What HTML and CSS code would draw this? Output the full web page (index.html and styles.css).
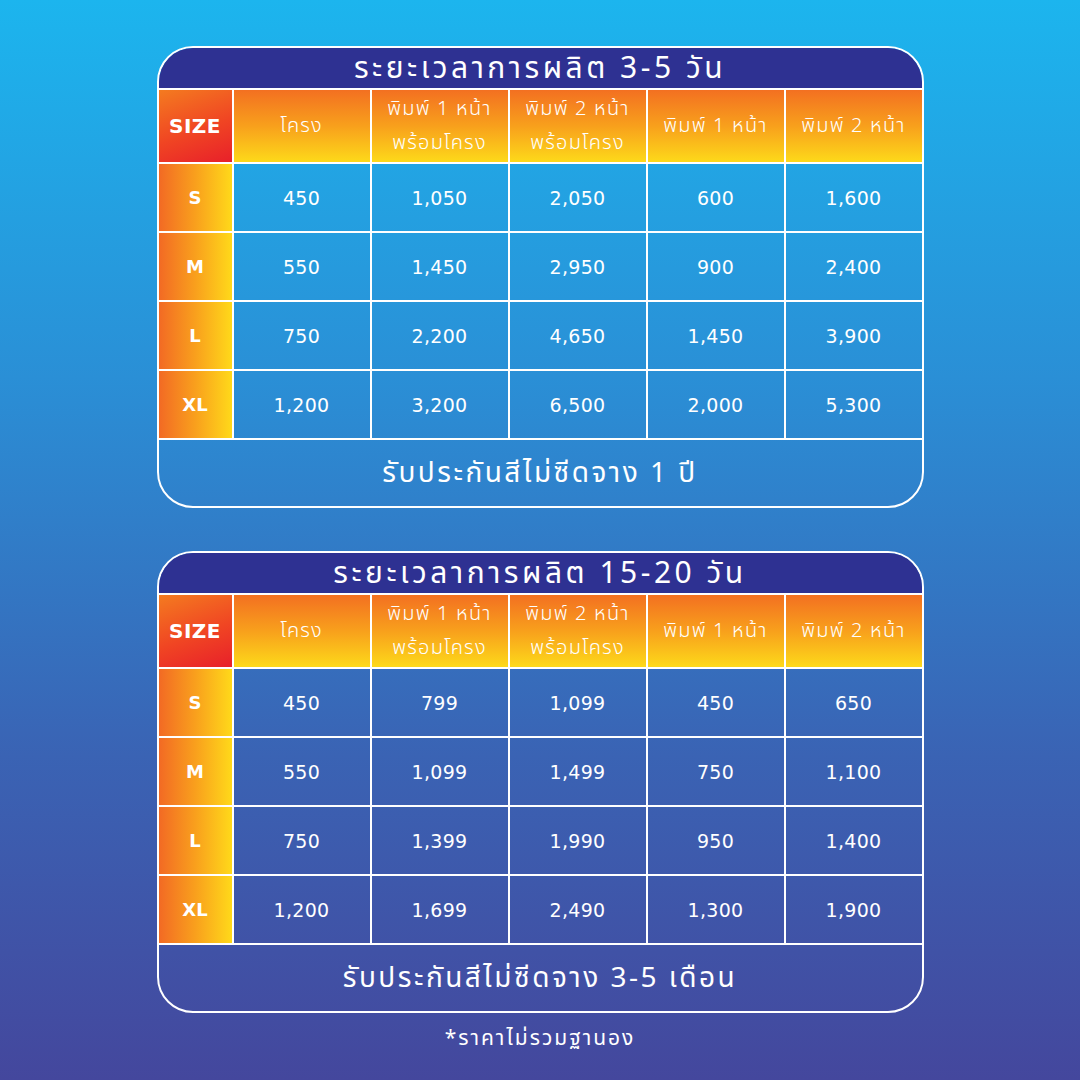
FILE: index.html
```html
<!DOCTYPE html>
<html lang="th">
<head>
<meta charset="utf-8">
<title>ราคา</title>
<link rel="stylesheet" href="styles.css">
</head>
<body>
<main class="page">
  <section class="card">
    <div class="card-title">ระยะเวลาการผลิต 3-5 วัน</div>
    <div class="grid">
      <div class="cell head size-head">SIZE</div>
      <div class="cell head">โครง</div>
      <div class="cell head two">พิมพ์ 1 หน้า<br>พร้อมโครง</div>
      <div class="cell head two">พิมพ์ 2 หน้า<br>พร้อมโครง</div>
      <div class="cell head">พิมพ์ 1 หน้า</div>
      <div class="cell head">พิมพ์ 2 หน้า</div>

      <div class="cell size">S</div>
      <div class="cell num">450</div><div class="cell num">1,050</div><div class="cell num">2,050</div><div class="cell num">600</div><div class="cell num">1,600</div>
      <div class="cell size">M</div>
      <div class="cell num">550</div><div class="cell num">1,450</div><div class="cell num">2,950</div><div class="cell num">900</div><div class="cell num">2,400</div>
      <div class="cell size">L</div>
      <div class="cell num">750</div><div class="cell num">2,200</div><div class="cell num">4,650</div><div class="cell num">1,450</div><div class="cell num">3,900</div>
      <div class="cell size">XL</div>
      <div class="cell num">1,200</div><div class="cell num">3,200</div><div class="cell num">6,500</div><div class="cell num">2,000</div><div class="cell num">5,300</div>
    </div>
    <div class="card-foot">รับประกันสีไม่ซีดจาง 1 ปี</div>
  </section>

  <section class="card">
    <div class="card-title">ระยะเวลาการผลิต 15-20 วัน</div>
    <div class="grid">
      <div class="cell head size-head">SIZE</div>
      <div class="cell head">โครง</div>
      <div class="cell head two">พิมพ์ 1 หน้า<br>พร้อมโครง</div>
      <div class="cell head two">พิมพ์ 2 หน้า<br>พร้อมโครง</div>
      <div class="cell head">พิมพ์ 1 หน้า</div>
      <div class="cell head">พิมพ์ 2 หน้า</div>

      <div class="cell size">S</div>
      <div class="cell num">450</div><div class="cell num">799</div><div class="cell num">1,099</div><div class="cell num">450</div><div class="cell num">650</div>
      <div class="cell size">M</div>
      <div class="cell num">550</div><div class="cell num">1,099</div><div class="cell num">1,499</div><div class="cell num">750</div><div class="cell num">1,100</div>
      <div class="cell size">L</div>
      <div class="cell num">750</div><div class="cell num">1,399</div><div class="cell num">1,990</div><div class="cell num">950</div><div class="cell num">1,400</div>
      <div class="cell size">XL</div>
      <div class="cell num">1,200</div><div class="cell num">1,699</div><div class="cell num">2,490</div><div class="cell num">1,300</div><div class="cell num">1,900</div>
    </div>
    <div class="card-foot">รับประกันสีไม่ซีดจาง 3-5 เดือน</div>
  </section>

  <p class="note">*ราคาไม่รวมฐานอง</p>
</main>
</body>
</html>
```

FILE: styles.css
```css
* { box-sizing: border-box; }

html, body {
  margin: 0;
  padding: 0;
}

body {
  width: 1080px;
  height: 1080px;
  overflow: hidden;
  background: linear-gradient(180deg, #1cb5ee 0%, #2a8fd6 35%, #3a63b4 70%, #44479d 100%);
  font-family: "Noto Sans Thai", "Noto Sans Thai UI", "Noto Sans", "DejaVu Sans", sans-serif;
  color: #fff;
}

.page {
  display: flex;
  flex-direction: column;
  align-items: center;
  padding-top: 46px;
}

.card {
  width: 767px;
  border: 2px solid #fff;
  border-radius: 36px;
  overflow: hidden;
  display: flex;
  flex-direction: column;
}

.card + .card { margin-top: 43px; }

.card-title {
  height: 40px;
  background: #2e3192;
  display: flex;
  align-items: center;
  justify-content: center;
  font-size: 30px;
  font-weight: 400;
  line-height: 1;
  letter-spacing: 3.5px;
  padding-top: 2px;
}

.grid {
  display: grid;
  grid-template-columns: 73px repeat(5, 1fr);
  grid-template-rows: 74px repeat(4, 69px);
}

.cell {
  border-top: 2px solid #fff;
  border-left: 2px solid #fff;
  display: flex;
  align-items: center;
  justify-content: center;
  text-align: center;
}

.cell:nth-child(6n+1) { border-left: none; }

.head {
  background: linear-gradient(180deg, #f37021 0%, #f8a01c 50%, #fdd91a 100%);
  font-size: 20px;
  font-weight: 300;
  line-height: 34px;
  letter-spacing: 1.2px;
  white-space: nowrap;
}

.size-head {
  background: linear-gradient(160deg, #f47b20 0%, #f04523 55%, #e8202a 100%);
  font-family: "DejaVu Sans", sans-serif;
  font-weight: 800;
  font-size: 20px;
  letter-spacing: 0.5px;
}

.size {
  background: linear-gradient(90deg, #f26a24 0%, #f9a01d 50%, #ffd91a 100%);
  font-family: "DejaVu Sans", sans-serif;
  font-weight: 800;
  font-size: 18px;
}

.num {
  font-family: "DejaVu Sans", sans-serif;
  font-size: 19px;
  font-weight: 400;
  letter-spacing: 0.3px;
}

.card-foot {
  height: 68px;
  border-top: 2px solid #fff;
  display: flex;
  align-items: center;
  justify-content: center;
  font-size: 28px;
  font-weight: 400;
  letter-spacing: 2.5px;
}

.note {
  margin: 10px 0 0;
  font-size: 21px;
  font-weight: 400;
  letter-spacing: 2px;
}
```
